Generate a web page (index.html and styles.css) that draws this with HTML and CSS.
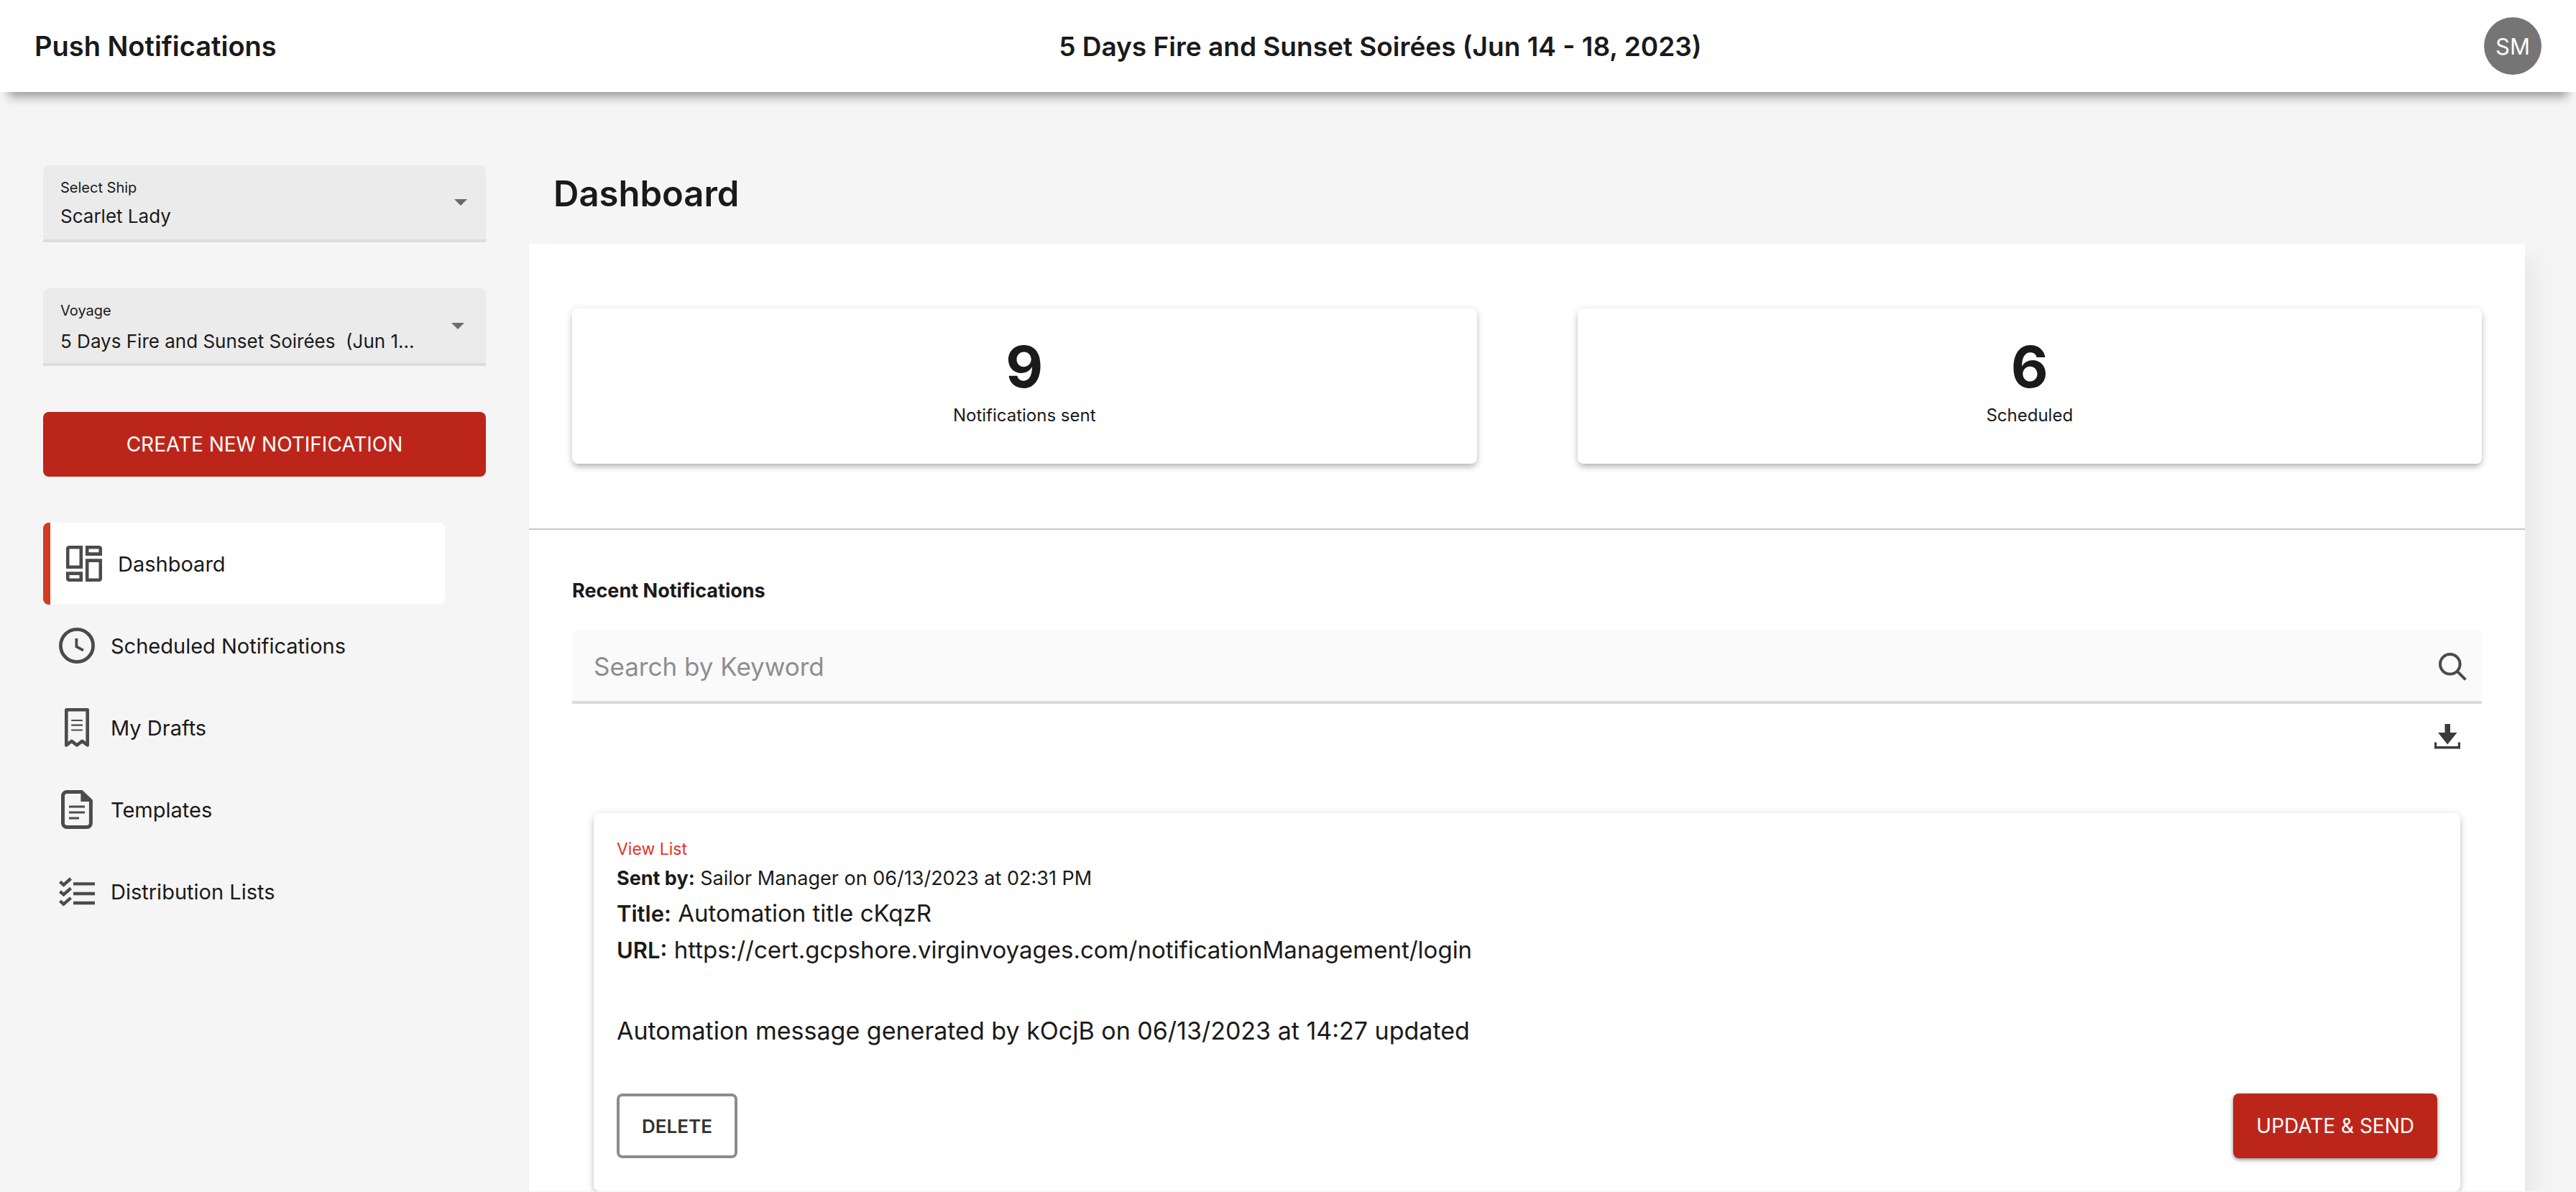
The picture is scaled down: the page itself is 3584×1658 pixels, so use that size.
FILE: index.html
```
<!DOCTYPE html>
<html lang="en">
<head>
<meta charset="utf-8">
<meta name="viewport" content="width=device-width, initial-scale=1">
<title>Push Notifications</title>
<link rel="stylesheet" href="styles.css">
</head>
<body>
<header class="topbar">
  <div class="topbar-name">Push Notifications</div>
  <div class="topbar-voyage">5 Days Fire and Sunset Soirées (Jun 14 - 18, 2023)</div>
  <button class="avatar" type="button" aria-label="Account: Sailor Manager">SM</button>
</header>
<div class="layout">
  <aside class="sidebar">
    <div class="field">
      <div class="field-body">
        <label class="field-label" for="ship">Select Ship</label>
        <select class="field-select" id="ship"><option>Scarlet Lady</option></select>
      </div>
      <svg class="field-arrow" viewBox="0 0 18 9" aria-hidden="true"><path d="M0 0h18L9 9z"/></svg>
    </div>
    <div class="field field-voyage">
      <div class="field-body">
        <label class="field-label" for="voyage">Voyage</label>
        <select class="field-select" id="voyage"><option>5 Days Fire and Sunset Soirées&nbsp; (Jun 1...</option></select>
      </div>
      <svg class="field-arrow" viewBox="0 0 18 9" aria-hidden="true"><path d="M0 0h18L9 9z"/></svg>
    </div>
    <button class="btn btn-create" type="button">CREATE NEW NOTIFICATION</button>
    <nav class="nav">
      <a class="nav-item nav-item-active" href="#dashboard" aria-current="page">
        <svg class="nav-icon" viewBox="0 0 50 54" aria-hidden="true"><g fill="none" stroke="currentColor" stroke-width="4.6"><path d="M20.8 4.2V31.8H2.2V6.2a2 2 0 0 1 2-2z"/><path d="M29.2 4.2h16.6a2 2 0 0 1 2 2v7.4H29.2z"/><path d="M2.2 40.6h18.6v9.2H4.2a2 2 0 0 1-2-2z"/><path d="M29.2 22.6h18.6v25.2a2 2 0 0 1-2 2H29.2z"/></g></svg>
        <span>Dashboard</span>
      </a>
      <a class="nav-item" href="#scheduled">
        <svg class="nav-icon" viewBox="0 0 50 54" aria-hidden="true"><g fill="none" stroke="currentColor"><circle cx="25" cy="27" r="22.6" stroke-width="4.8"/><path d="M24.4 17v11.4L34 33.6" stroke-width="3.8"/></g></svg>
        <span>Scheduled Notifications</span>
      </a>
      <a class="nav-item" href="#drafts">
        <svg class="nav-icon" viewBox="0 0 50 54" aria-hidden="true"><g fill="none" stroke="currentColor" stroke-linejoin="round"><path d="M10.3 2.3h29.4v49.2l-7.4-5.6-7.3 5.6-7.3-5.6-7.4 5.6z" stroke-width="4.6"/><path d="M18 17h14M18 23.7h14M18 30.5h14" stroke-width="2.2" stroke-linecap="round"/></g></svg>
        <span>My Drafts</span>
      </a>
      <a class="nav-item" href="#templates">
        <svg class="nav-icon" viewBox="0 0 50 54" aria-hidden="true"><path d="M11 2.5h20.5L44.4 14.8V46a5.5 5.5 0 0 1-5.5 5.5H11A5.5 5.5 0 0 1 5.5 46V8A5.5 5.5 0 0 1 11 2.5z" fill="none" stroke="currentColor" stroke-width="5"/><path d="M30.4 2h3L46 13.6V16H30.4z" fill="currentColor"/><path d="M14 23h22M14 31h22M14 39h14" fill="none" stroke="currentColor" stroke-width="2.8"/></svg>
        <span>Templates</span>
      </a>
      <a class="nav-item" href="#lists">
        <svg class="nav-icon" viewBox="0 0 50 54" aria-hidden="true"><g fill="none" stroke="currentColor" stroke-width="4.4"><path d="M20 16.4h30M20 30h30M20 43h30"/><path d="M1.500 13.3l5 4.5L16.500 9M1.500 26.800l5 4.500L16.500 22.500M1.500 40.100l5 4.500L16.500 35.800"/></g></svg>
        <span>Distribution Lists</span>
      </a>
    </nav>
  </aside>
  <main class="main">
    <h1 class="page-title">Dashboard</h1>
    <div class="panel">
      <section class="stats">
        <div class="stat"><div class="stat-value">9</div><div class="stat-label">Notifications sent</div></div>
        <div class="stat"><div class="stat-value">6</div><div class="stat-label">Scheduled</div></div>
      </section>
      <section class="recent">
        <h2 class="recent-title">Recent Notifications</h2>
        <form class="search" role="search">
          <input class="search-input" type="text" placeholder="Search by Keyword" aria-label="Search by Keyword">
          <button class="icon-btn" type="button" aria-label="Search">
            <svg class="icon-search" viewBox="0 0 39 39" aria-hidden="true"><g fill="none" stroke="currentColor" stroke-width="4"><circle cx="15.8" cy="15.8" r="13.8"/><path d="M25.5 25.5L37.4 37.400"/></g></svg>
          </button>
        </form>
        <div class="tools">
          <button class="icon-btn" type="button" aria-label="Download">
            <svg class="icon-download" viewBox="0 0 36 35" aria-hidden="true"><g fill="currentColor"><path d="M14.5 0h7.500v12H31.500L18.200 28.500 5 12h9.500z"/><path d="M0 25.500h3.200v5.500h29.600v-5.500H36V34.500H0z"/></g></svg>
          </button>
        </div>
        <article class="note">
          <a class="note-link" href="#recipients">View List</a>
          <p class="note-sent"><b>Sent by:</b> Sailor Manager on 06/13/2023 at 02:31 PM</p>
          <p class="note-line"><b class="note-key">Title:</b> Automation title cKqzR</p>
          <p class="note-line"><b class="note-key">URL:</b> https://cert.gcpshore.virginvoyages.com/notificationManagement/login</p>
          <p class="note-message">Automation message generated by kOcjB on 06/13/2023 at 14:27 updated</p>
          <div class="note-actions">
            <button class="btn btn-outline" type="button">DELETE</button>
            <button class="btn btn-send" type="button">UPDATE &amp; SEND</button>
          </div>
        </article>
      </section>
    </div>
  </main>
</div>
</body>
</html>
```
FILE: styles.css
```
*,
*::before,
*::after {
  box-sizing: border-box;
}

body {
  margin: 0;
  background: #f5f5f5;
  color: #1a1a1a;
  font-family: Inter, "Liberation Sans", sans-serif;
}

h1,
h2,
p {
  margin: 0;
}

button,
input,
select {
  margin: 0;
  padding: 0;
  border: 0;
  background: none;
  color: inherit;
  font: inherit;
}

button {
  cursor: pointer;
}

/* Top bar */
.topbar {
  display: flex;
  align-items: center;
  justify-content: space-between;
  height: 128px;
  padding: 0 48px;
  background: #fff;
  box-shadow: 0 18px 14px -12px rgba(0, 0, 0, 0.4);
  font-weight: 600;
}

.topbar-name {
  font-size: 38px;
}

.topbar-voyage {
  font-size: 37px;
}

.avatar {
  width: 80px;
  height: 80px;
  border-radius: 50%;
  background: #757575;
  color: #fff;
  font-size: 31px;
  font-weight: 400;
}

.layout {
  display: flex;
  padding-top: 102px;
}

/* Sidebar */
.sidebar {
  flex: none;
  width: 736px;
  padding: 0 60px;
}

.field {
  display: flex;
  align-items: center;
  padding: 0 26px 0 24px;
  border-bottom: 4px solid #dcdcdc;
  border-radius: 8px 8px 0 0;
  background: #ebebeb;
}

.field-body {
  display: flex;
  flex: 1;
  flex-direction: column;
  gap: 10px;
  padding: 19px 0 14px;
}

.field-voyage {
  margin-top: 64px;
  padding-right: 30px;
}

.field-voyage .field-body {
  gap: 13px;
  padding-bottom: 12px;
}

.field-label {
  font-size: 20px;
  line-height: 24px;
}

.field-select {
  width: 100%;
  height: 36px;
  appearance: none;
  font-size: 26px;
  line-height: 36px;
}

.field-arrow {
  flex: none;
  width: 18px;
  height: 9px;
  fill: #6b6b6b;
}

.btn {
  height: 90px;
  border-radius: 8px;
  font-size: 28px;
}

.btn-create {
  width: 100%;
  margin-top: 64px;
  background: #bc261a;
  color: #fff;
}

.nav {
  margin: 64px 57px 0 0;
}

.nav-item {
  display: flex;
  align-items: center;
  gap: 22px;
  height: 114px;
  padding-left: 22px;
  color: inherit;
  font-size: 29px;
  text-decoration: none;
}

.nav-item-active {
  border-left: 10px solid #d43b22;
  border-radius: 8px;
  background: #fff;
}

.nav-icon {
  width: 50px;
  height: 54px;
  color: #4b4b4b;
}

/* Main column */
.main {
  flex: 1;
  min-width: 0;
  padding-right: 71px;
}

.page-title {
  margin-bottom: 29px;
  padding-left: 34px;
  font-size: 49px;
  font-weight: 600;
  line-height: 80px;
}

.panel {
  background: #fff;
  box-shadow: 16px 20px 28px rgba(0, 0, 0, 0.05);
}

.stats {
  display: grid;
  grid-template-columns: 1fr 1fr;
  gap: 140px;
  padding: 90px 60px;
  border-bottom: 2px solid #c8c8c8;
}

.stat,
.note {
  border-radius: 8px;
  background: #fff;
  box-shadow: 0 6px 8px -2px rgba(0, 0, 0, 0.2), 0 2px 12px rgba(0, 0, 0, 0.16);
}

.stat {
  padding: 33px 0 47px;
  text-align: center;
}

.stat-value {
  font-size: 80px;
  font-weight: 700;
  line-height: 96px;
}

.stat-label {
  font-size: 24px;
  line-height: 40px;
}

.recent {
  padding: 64px 60px 0;
}

.recent-title {
  font-size: 27px;
  font-weight: 700;
  line-height: 42px;
}

.search {
  display: flex;
  align-items: center;
  height: 103px;
  margin-top: 33px;
  padding: 3px 21px 0 30px;
  border-bottom: 4px solid #dcdcdc;
  border-radius: 8px 8px 0 0;
  background: #fafafa;
}

.search-input {
  flex: 1;
  height: 100%;
  outline: 0;
  font-size: 35px;
}

.search-input::placeholder {
  color: #8e8e8e;
  opacity: 1;
}

.icon-btn {
  display: flex;
  color: #4b4b4b;
}

.icon-search {
  width: 39px;
  height: 39px;
}

.icon-download {
  width: 36px;
  height: 35px;
  color: #3c3c3c;
}

.tools {
  display: flex;
  justify-content: flex-end;
  padding: 28px 30px 0;
}

/* Notification card */
.note {
  margin: 89px 30px 0;
  padding: 32px 32px 46px;
}

.note-link {
  display: block;
  color: #e8321f;
  font-size: 23px;
  line-height: 36px;
  text-decoration: none;
}

.note-sent {
  font-size: 27px;
  line-height: 46px;
}

.note-line {
  font-size: 33px;
  line-height: 50px;
}

.note-key {
  font-size: 31px;
  font-weight: 600;
}

.note-message {
  margin: 62px 0;
  font-size: 34px;
  line-height: 50px;
}

.note-actions {
  display: flex;
  justify-content: space-between;
}

.btn-outline {
  padding: 0 31px;
  border: 4px solid #8c8c8c;
  color: #333;
  font-size: 26px;
  font-weight: 600;
}

.btn-send {
  padding: 0 32px;
  background: #bc261a;
  box-shadow: 0 2px 4px rgba(0, 0, 0, 0.35), 0 2px 10px rgba(0, 0, 0, 0.15);
  color: #fff;
}
```
